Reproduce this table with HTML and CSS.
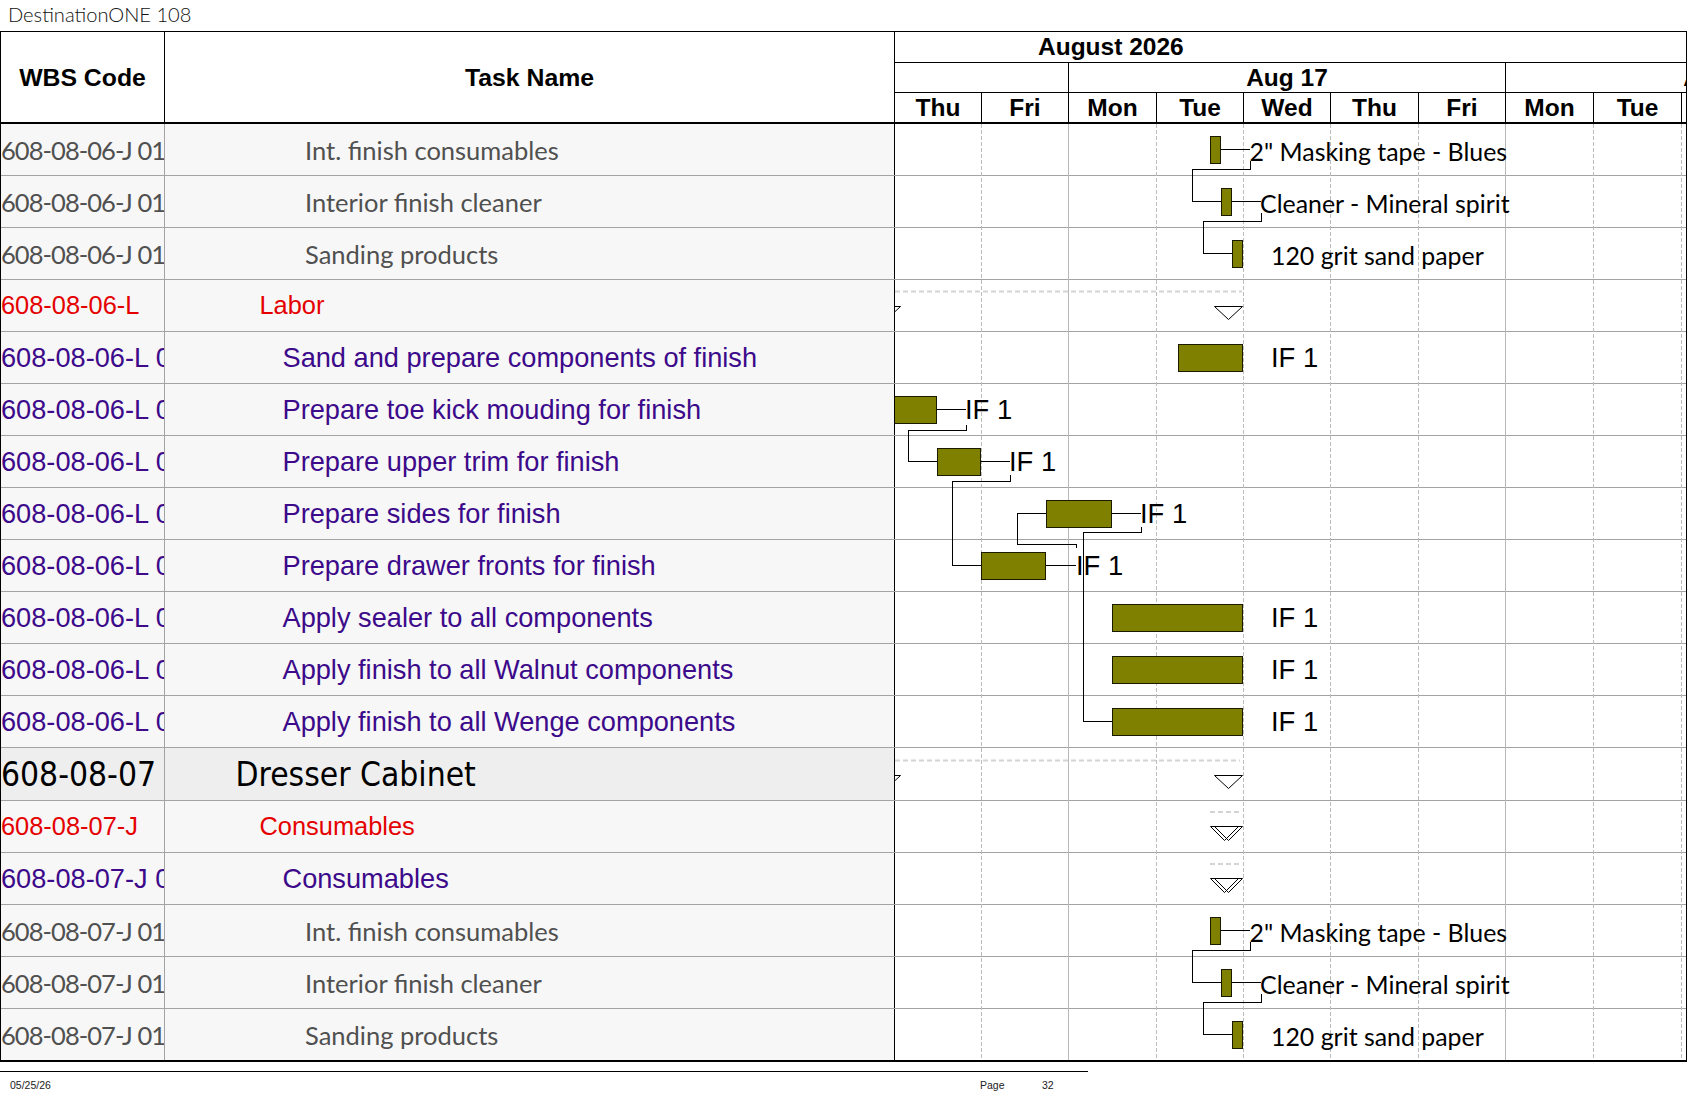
FILE: index.html
```html
<!DOCTYPE html>
<html>
<head>
<meta charset="utf-8">
<title>DestinationONE 108</title>
<link rel="stylesheet" href="styles.css">
</head>
<body>
<div class="title">DestinationONE 108</div>
<div class="chart">
  <div class="table">
    <div class="thead">
      <div class="th th-wbs">WBS Code</div>
      <div class="th th-task">Task Name</div>
    </div>
    <div class="row r-gray"><div class="c-wbs">608-08-06-J 01</div><div class="c-task">Int. finish consumables</div></div>
    <div class="row r-gray"><div class="c-wbs">608-08-06-J 01</div><div class="c-task">Interior finish cleaner</div></div>
    <div class="row r-gray"><div class="c-wbs">608-08-06-J 01</div><div class="c-task">Sanding products</div></div>
    <div class="row r-red"><div class="c-wbs">608-08-06-L</div><div class="c-task">Labor</div></div>
    <div class="row r-purple"><div class="c-wbs">608-08-06-L 01</div><div class="c-task">Sand and prepare components of finish</div></div>
    <div class="row r-purple"><div class="c-wbs">608-08-06-L 02</div><div class="c-task">Prepare toe kick mouding for finish</div></div>
    <div class="row r-purple"><div class="c-wbs">608-08-06-L 03</div><div class="c-task">Prepare upper trim for finish</div></div>
    <div class="row r-purple"><div class="c-wbs">608-08-06-L 04</div><div class="c-task">Prepare sides for finish</div></div>
    <div class="row r-purple"><div class="c-wbs">608-08-06-L 05</div><div class="c-task">Prepare drawer fronts for finish</div></div>
    <div class="row r-purple"><div class="c-wbs">608-08-06-L 06</div><div class="c-task">Apply sealer to all components</div></div>
    <div class="row r-purple"><div class="c-wbs">608-08-06-L 07</div><div class="c-task">Apply finish to all Walnut components</div></div>
    <div class="row r-purple"><div class="c-wbs">608-08-06-L 08</div><div class="c-task">Apply finish to all Wenge components</div></div>
    <div class="row r-dresser"><div class="c-wbs">608-08-07</div><div class="c-task">Dresser Cabinet</div></div>
    <div class="row r-red"><div class="c-wbs">608-08-07-J</div><div class="c-task">Consumables</div></div>
    <div class="row r-purple"><div class="c-wbs">608-08-07-J 01</div><div class="c-task">Consumables</div></div>
    <div class="row r-gray"><div class="c-wbs">608-08-07-J 01</div><div class="c-task">Int. finish consumables</div></div>
    <div class="row r-gray"><div class="c-wbs">608-08-07-J 01</div><div class="c-task">Interior finish cleaner</div></div>
    <div class="row r-gray row-last"><div class="c-wbs">608-08-07-J 01</div><div class="c-task">Sanding products</div></div>
  </div>
  <div class="gantt">
    <div class="ghead">
      <div class="g-month">August 2026</div>
      <div class="g-weeks">
        <div class="wk wk-a"></div>
        <div class="wk wk-b">Aug 17</div>
        <div class="wk wk-c">Aug 24</div>
      </div>
      <div class="g-days">
        <div class="d d-first">Thu</div>
        <div class="d w87">Fri</div>
        <div class="d w88">Mon</div>
        <div class="d w87">Tue</div>
        <div class="d w87">Wed</div>
        <div class="d w88">Thu</div>
        <div class="d w87">Fri</div>
        <div class="d w88">Mon</div>
        <div class="d w88">Tue</div>
        <div class="d w88">Wed</div>
      </div>
    </div>
    <div class="gbody">
      <div class="grow"></div><div class="grow"></div><div class="grow"></div>
      <div class="grow"></div><div class="grow"></div><div class="grow"></div>
      <div class="grow"></div><div class="grow"></div><div class="grow"></div>
      <div class="grow"></div><div class="grow"></div><div class="grow"></div>
      <div class="grow grow-tall"></div>
      <div class="grow"></div><div class="grow"></div><div class="grow"></div>
      <div class="grow"></div><div class="grow grow-last"></div>
      <svg class="canvas" width="791" height="936" viewBox="895 124 791 936" xmlns="http://www.w3.org/2000/svg">
        <g class="vgrid">
          <path class="vd" d="M981.5 124 V1060"/>
          <path class="vs" d="M1068.5 124 V1060"/>
          <path class="vd" d="M1156.5 124 V1060"/>
          <path class="vd" d="M1243.5 124 V1060"/>
          <path class="vd" d="M1330.5 124 V1060"/>
          <path class="vd" d="M1418.5 124 V1060"/>
          <path class="vs" d="M1505.5 124 V1060"/>
          <path class="vd" d="M1593.5 124 V1060"/>
          <path class="vd" d="M1681.5 124 V1060"/>
        </g>
        <g class="summary">
          <path class="sum" d="M895 291.5 H1242"/>
          <path class="sum" d="M895 760.5 H1240"/>
          <path class="sum" d="M1210 812 H1242"/>
          <path class="sum" d="M1210 864 H1242"/>
          <polygon class="tri" points="872.5,306.5 900.5,306.5 886.5,319.5"/>
          <polygon class="tri" points="1214.5,306.5 1242.5,306.5 1228.5,319.5"/>
          <polygon class="tri" points="872.5,775.5 900.5,775.5 886.5,788.5"/>
          <polygon class="tri" points="1214.5,775.5 1242.5,775.5 1228.5,788.5"/>
          <polygon class="tri" points="1210.5,826.5 1238.5,826.5 1224.5,840.5"/>
          <polygon class="tri" points="1214.5,826.5 1242.5,826.5 1228.5,840.5"/>
          <polygon class="tri" points="1210.5,878.5 1238.5,878.5 1224.5,892.5"/>
          <polygon class="tri" points="1214.5,878.5 1242.5,878.5 1228.5,892.5"/>
        </g>
        <g class="links">
          <path class="ln" d="M1221 149.5 H1250"/>
          <path class="ln" d="M1232 201.5 H1261"/>
          <path class="ln" d="M937 409.5 H966"/>
          <path class="ln" d="M981 461.5 H1010"/>
          <path class="ln" d="M1112 513.5 H1141"/>
          <path class="ln" d="M1046 565.5 H1076"/>
          <path class="ln" d="M1221 930.5 H1250"/>
          <path class="ln" d="M1232 982.5 H1261"/>
          <path class="ln" d="M1250.5 161 V169.5 H1192.5 V201.5 H1221"/>
          <path class="ln" d="M1261.5 213 V221.5 H1203.5 V253.5 H1232"/>
          <path class="ln" d="M966.5 425 V430.5 H908.5 V461.5 H937"/>
          <path class="ln" d="M1010.5 475 V481.5 H952.5 V565.5 H981"/>
          <path class="ln" d="M1076.5 548 V544.5 H1017.5 V513.5 H1046"/>
          <path class="ln" d="M1141.5 527 V532.5 H1083.5 V721.5 H1112"/>
          <path class="ln" d="M1250.5 942 V950.5 H1192.5 V982.5 H1221"/>
          <path class="ln" d="M1261.5 994 V1002.5 H1203.5 V1034.5 H1232"/>
        </g>
        <g class="bars">
          <rect class="bar" x="1210.5" y="136" width="10" height="27"/>
          <rect class="bar" x="1221.5" y="188" width="10" height="27"/>
          <rect class="bar" x="1232.5" y="240" width="10" height="27"/>
          <rect class="bar" x="1178.5" y="344" width="64" height="27"/>
          <rect class="bar" x="894.5" y="396" width="42" height="27"/>
          <rect class="bar" x="937.5" y="448" width="43" height="27"/>
          <rect class="bar" x="1046.5" y="500" width="65" height="27"/>
          <rect class="bar" x="981.5" y="552" width="64" height="27"/>
          <rect class="bar" x="1112.5" y="604" width="130" height="27"/>
          <rect class="bar" x="1112.5" y="656" width="130" height="27"/>
          <rect class="bar" x="1112.5" y="708" width="130" height="27"/>
          <rect class="bar" x="1210.5" y="917" width="10" height="27"/>
          <rect class="bar" x="1221.5" y="969" width="10" height="27"/>
          <rect class="bar" x="1232.5" y="1021" width="10" height="27"/>
        </g>
        <g class="labels">
          <text class="lc" x="1249.5" y="160.5">2" Masking tape - Blues</text>
          <text class="lc" x="1260" y="212.5">Cleaner - Mineral spirit</text>
          <text class="lc" x="1271" y="264.5">120 grit sand paper</text>
          <text class="la" x="1271" y="367">IF 1</text>
          <text class="la" x="965" y="419">IF 1</text>
          <text class="la" x="1009" y="471">IF 1</text>
          <text class="la" x="1140" y="523">IF 1</text>
          <text class="la" x="1076" y="575">IF 1</text>
          <text class="la" x="1271" y="627">IF 1</text>
          <text class="la" x="1271" y="679">IF 1</text>
          <text class="la" x="1271" y="731">IF 1</text>
          <text class="lc" x="1249.5" y="941.5">2" Masking tape - Blues</text>
          <text class="lc" x="1260" y="993.5">Cleaner - Mineral spirit</text>
          <text class="lc" x="1271" y="1045.5">120 grit sand paper</text>
        </g>
      </svg>
    </div>
  </div>
</div>
<div class="footer">
  <span class="f-date">05/25/26</span>
  <span class="f-page">Page</span>
  <span class="f-num">32</span>
</div>
</body>
</html>
```

FILE: styles.css
```css
* { box-sizing: border-box; }

body {
  margin: 0;
  background: #ffffff;
  width: 1687px;
  height: 1097px;
  overflow: hidden;
}

.title {
  height: 31px;
  padding: 3px 0 0 8px;
  font-family: Lato, "Liberation Sans", sans-serif;
  font-weight: 300;
  font-size: 20.1px;
  line-height: 22px;
  color: #111;
}

.chart {
  display: flex;
  width: 1687px;
  border-top: 1px solid #000;
  border-left: 1px solid #000;
  border-bottom: 2px solid #000;
}

.table { width: 894px; flex: none; }

.thead {
  display: flex;
  height: 92px;
  border-bottom: 2px solid #000;
}

.th {
  display: flex;
  align-items: center;
  justify-content: center;
  padding-top: 1px;
  font-family: "Liberation Sans", Arial, sans-serif;
  font-weight: bold;
  font-size: 24.8px;
  color: #000;
}
.th-wbs { width: 164px; border-right: 1px solid #000; }
.th-task { width: 730px; border-right: 1px solid #000; }

.row {
  display: flex;
  height: 52px;
  border-bottom: 1px solid #a3a3a3;
  background: #f7f7f7;
}
.row-last { height: 51px; border-bottom: none; }
.r-dresser { height: 53px; background: #eeeeee; }

.c-wbs, .c-task {
  display: flex;
  align-items: center;
  white-space: nowrap;
  overflow: hidden;
}
.c-wbs { width: 164px; border-right: 1px solid #a3a3a3; }
.c-task { width: 730px; border-right: 1px solid #000; }

.r-gray {
  font-family: Lato, "Liberation Sans", sans-serif;
  font-size: 25.5px;
  color: #505050;
}
.r-gray .c-wbs { letter-spacing: -0.95px; }
.r-gray .c-task { padding-left: 140px; }

.r-red {
  font-family: "Liberation Sans", Arial, sans-serif;
  font-size: 25.4px;
  color: #e50000;
}
.r-red .c-task { padding-left: 94.5px; }

.r-purple {
  font-family: "Liberation Sans", Arial, sans-serif;
  font-size: 27.2px;
  color: #3c0a8a;
}
.r-purple .c-task { padding-left: 117.5px; }

.r-dresser {
  font-family: "DejaVu Sans Condensed", "DejaVu Sans", sans-serif;
  font-stretch: condensed;
  font-size: 33.3px;
  color: #000;
}
.r-dresser .c-task { padding-left: 70.5px; }

/* Gantt */
.gantt {
  width: 792px;
  flex: none;
  border-right: 1px solid #000;
  overflow: hidden;
}

.ghead {
  height: 92px;
  border-bottom: 2px solid #000;
  font-family: "Liberation Sans", Arial, sans-serif;
  font-weight: bold;
  font-size: 24.5px;
  color: #000;
}

.g-month {
  height: 31px;
  border-bottom: 1px solid #000;
  display: flex;
  align-items: center;
  padding-left: 143px;
  white-space: nowrap;
}

.g-weeks {
  height: 30px;
  border-bottom: 1px solid #000;
  display: flex;
}
.wk {
  flex: none;
  display: flex;
  align-items: center;
  justify-content: center;
  white-space: nowrap;
}
.wk-a { width: 173px; }
.wk-b { width: 437px; border-left: 1px solid #000; }
.wk-c { width: 437px; border-left: 1px solid #000; }

.g-days {
  height: 29px;
  display: flex;
}
.d {
  flex: none;
  display: flex;
  align-items: center;
  justify-content: center;
  border-left: 1px solid #000;
  white-space: nowrap;
}
.d-first { width: 86px; border-left: none; }
.w87 { width: 87px; }
.w88 { width: 88px; }

.gbody { position: relative; }
.grow { height: 52px; border-bottom: 1px solid #a3a3a3; }
.grow-tall { height: 53px; }
.grow-last { height: 51px; border-bottom: none; }

.canvas {
  position: absolute;
  left: 0;
  top: 0;
  overflow: hidden;
}

.vd { stroke: #bcbcbc; stroke-width: 1; stroke-dasharray: 4 2; fill: none; }
.vs { stroke: #b8b8b8; stroke-width: 1; fill: none; }
.sum { stroke: #d4d4d4; stroke-width: 2; stroke-dasharray: 5 3; fill: none; }
.tri { fill: none; stroke: #000; stroke-width: 1; }
.ln { fill: none; stroke: #000; stroke-width: 1; shape-rendering: crispEdges; }
.bar { fill: #808000; stroke: #1a1a00; stroke-width: 1; shape-rendering: crispEdges; }
.la { font-family: "Liberation Sans", Arial, sans-serif; font-size: 27.4px; fill: #000; }
.lc { font-family: Lato, "Liberation Sans", sans-serif; font-size: 24.9px; fill: #000; }

.footer {
  display: flex;
  width: 1088px;
  margin-top: 9px;
  border-top: 1.5px solid #000;
  padding-top: 7px;
  font-family: "Liberation Sans", Arial, sans-serif;
  font-size: 10.5px;
  line-height: 12px;
  color: #222;
}
.f-date { width: 980px; padding-left: 10px; }
.f-page { width: 62px; }
```
